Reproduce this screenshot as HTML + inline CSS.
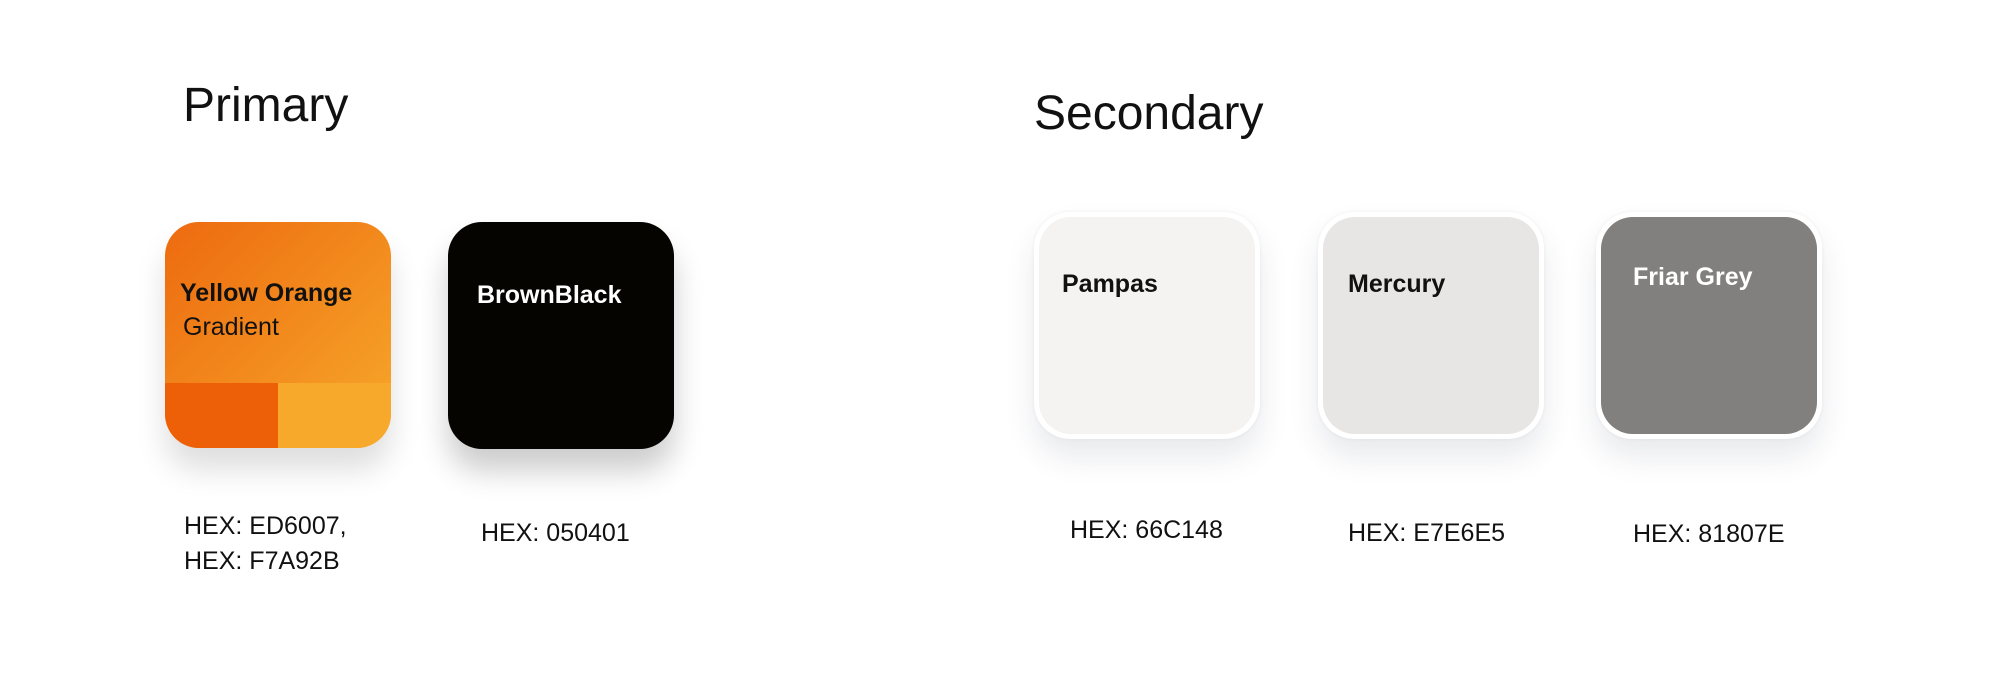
<!DOCTYPE html>
<html><head><meta charset="utf-8"><style>
html,body{margin:0;padding:0;background:#fff;}
body{width:2014px;height:680px;position:relative;overflow:hidden;font-family:"Liberation Sans",sans-serif;color:#111;}
.a{position:absolute;white-space:nowrap;}
.h{font-size:48px;line-height:1;}
.t{font-size:25px;line-height:1;}
.b{font-size:25px;font-weight:bold;line-height:1;}
.card{position:absolute;border-radius:34px;overflow:hidden;}
.sec{position:absolute;width:226px;height:227px;border-radius:36px;background:#fff;box-shadow:0 18px 30px rgba(40,50,80,0.10),0 0 4px rgba(0,0,0,0.06);}
.sec div{position:absolute;left:5px;top:5px;right:5px;bottom:5px;border-radius:32px;}
</style></head><body>
<div class="a h" style="left:183px;top:82px;">Primary</div>
<div class="a h" style="left:1034px;top:90px;">Secondary</div>

<div class="card" style="left:165px;top:222px;width:226px;height:226px;box-shadow:0 22px 30px rgba(0,0,0,0.13);background:linear-gradient(135deg,#ed6a0f 0%,#f7a92b 100%);">
 <div style="position:absolute;left:0;top:161px;width:113px;height:65px;background:#ed6007;"></div>
 <div style="position:absolute;left:113px;top:161px;width:113px;height:65px;background:#f7a92b;"></div>
</div>
<div class="a b" style="left:180px;top:281px;">Yellow Orange</div>
<div class="a t" style="left:183px;top:315px;">Gradient</div>

<div class="card" style="left:448px;top:222px;width:226px;height:227px;background:#050401;box-shadow:0 22px 30px rgba(0,0,0,0.2);"></div>
<div class="a b" style="left:477px;top:283px;color:#fff;">BrownBlack</div>

<div class="a t" style="left:184px;top:514px;">HEX: ED6007,</div>
<div class="a t" style="left:184px;top:549px;">HEX: F7A92B</div>
<div class="a t" style="left:481px;top:521px;">HEX: 050401</div>

<div class="sec" style="left:1034px;top:212px;"><div style="background:#f4f3f2;"></div></div>
<div class="sec" style="left:1318px;top:212px;"><div style="background:#e7e6e5;"></div></div>
<div class="sec" style="left:1596px;top:212px;"><div style="background:#81807e;"></div></div>
<div class="a b" style="left:1062px;top:272px;">Pampas</div>
<div class="a b" style="left:1348px;top:272px;">Mercury</div>
<div class="a b" style="left:1633px;top:265px;color:#fff;">Friar Grey</div>

<div class="a t" style="left:1070px;top:518px;">HEX: 66C148</div>
<div class="a t" style="left:1348px;top:521px;">HEX: E7E6E5</div>
<div class="a t" style="left:1633px;top:522px;">HEX: 81807E</div>
</body></html>
